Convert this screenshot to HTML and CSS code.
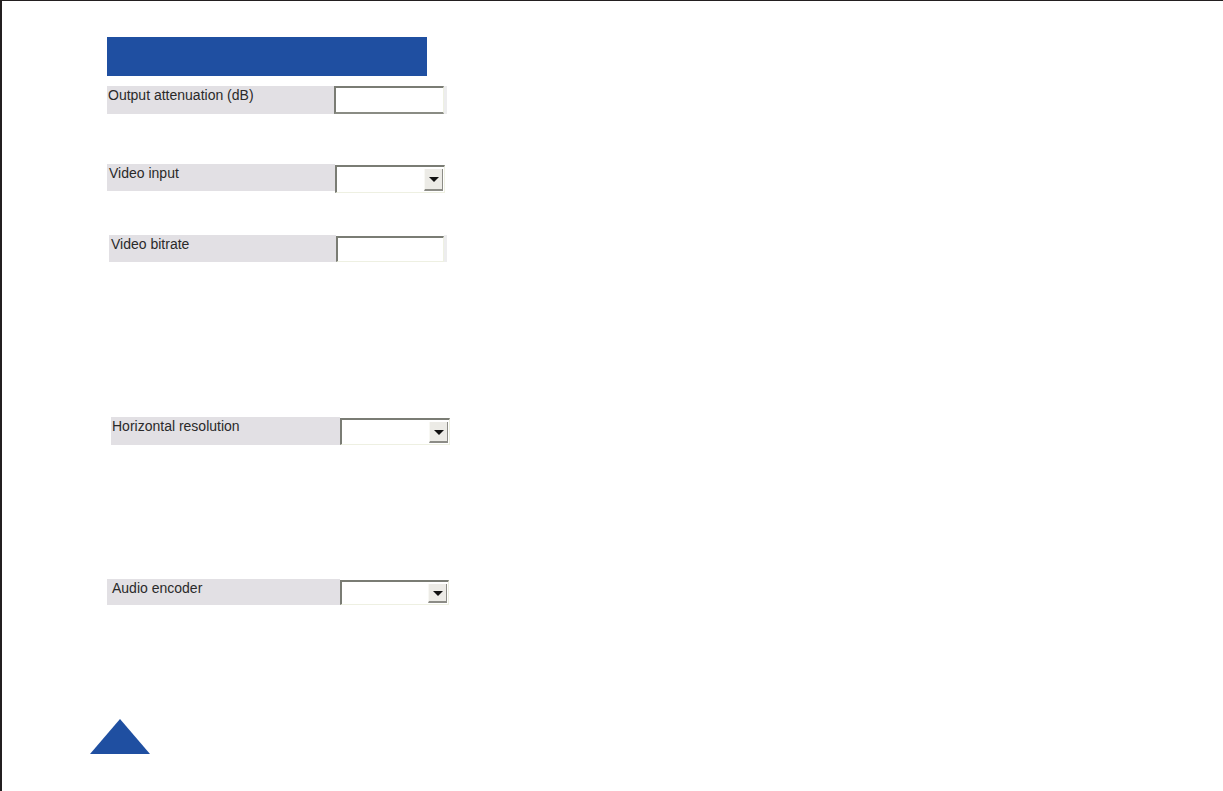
FILE: index.html
```html
<!DOCTYPE html>
<html lang="en">
<head>
    <meta charset="UTF-8">
    <title>Settings</title>
    <link rel="stylesheet" href="styles.css">
</head>
<body>
    <div class="page">
        <div class="header"></div>

        <div class="row row-attenuation">
            <div class="label">Output attenuation (dB)</div>
            <div class="field"></div>
            <div class="edge"></div>
        </div>

        <div class="row row-video-input">
            <div class="label">Video input</div>
            <div class="field combo"><span class="arrow"></span></div>
        </div>

        <div class="row row-bitrate">
            <div class="label">Video bitrate</div>
            <div class="field"></div>
            <div class="edge"></div>
        </div>

        <div class="row row-resolution">
            <div class="label">Horizontal resolution</div>
            <div class="field combo"><span class="arrow"></span></div>
        </div>

        <div class="row row-audio">
            <div class="label">Audio encoder</div>
            <div class="field combo"><span class="arrow"></span></div>
        </div>

        <div class="up-mark"></div>
    </div>
</body>
</html>
```

FILE: styles.css
```css
body {
    margin: 0;
    font-family: "Liberation Sans", Arial, sans-serif;
    background: #fff;
}
.page {
    box-sizing: border-box;
    width: 1223px;
    height: 791px;
    border-top: 1px solid #231f20;
    border-left: 2px solid #231f20;
    padding-left: 105px;
    overflow: hidden;
}
.header {
    margin-top: 36px;
    width: 320px;
    height: 39px;
    background-color: #1f4fa1;
}
.row {
    display: flex;
    align-items: flex-start;
}
.label {
    box-sizing: border-box;
    background-color: #e2e0e4;
    color: #2a2a2a;
    font-size: 14px;
    line-height: 17px;
    padding: 1px 0 0 1px;
    overflow: hidden;
    white-space: nowrap;
}
.field {
    box-sizing: border-box;
    position: relative;
    background: #fff;
    border-top: 2px solid #7a7c74;
    border-left: 2px solid #7a7c74;
    border-right: 1px solid #eef0e2;
    border-bottom: 1px solid #eef0e2;
}
.edge {
    width: 3px;
    background: #ededee;
    align-self: stretch;
}
.combo .arrow {
    position: absolute;
    right: 1px;
    top: 2px;
    bottom: 1px;
    width: 19px;
    background: #ecebe6;
    border-left: 1px solid #f8f8f4;
    border-bottom: 2px solid #8c8c86;
    border-right: 1px solid #8c8c86;
    box-sizing: border-box;
}
.combo .arrow::after {
    content: "";
    position: absolute;
    left: 4px;
    top: 50%;
    margin-top: -2px;
    border-left: 5px solid transparent;
    border-right: 5px solid transparent;
    border-top: 5px solid #111;
}

.row-attenuation {
    margin-top: 10px;
}
.row-attenuation .label {
    width: 227px;
    height: 28px;
}
.row-attenuation .field {
    width: 110px;
    height: 28px;
    border-bottom: 2px solid #8a8c84;
}

.row-video-input {
    margin-top: 50px;
}
.row-video-input .label {
    width: 228px;
    height: 27px;
    padding-left: 2px;
}
.row-video-input .field {
    width: 110px;
    height: 28px;
    margin-top: 1px;
}

.row-bitrate {
    margin-top: 42px;
    margin-left: 2px;
}
.row-bitrate .label {
    width: 227px;
    height: 27px;
    padding-left: 2px;
}
.row-bitrate .field {
    width: 108px;
    height: 26px;
    margin-top: 1px;
}

.row-resolution {
    margin-top: 155px;
    margin-left: 4px;
}
.row-resolution .label {
    width: 229px;
    height: 28px;
    padding-left: 1px;
}
.row-resolution .field {
    width: 110px;
    height: 27px;
    margin-top: 1px;
}

.row-audio {
    margin-top: 134px;
}
.row-audio .label {
    width: 233px;
    height: 26px;
    padding-left: 5px;
}
.row-audio .field {
    width: 109px;
    height: 25px;
    margin-top: 1px;
}

.up-mark {
    margin-top: 114px;
    margin-left: -17px;
    width: 0;
    height: 0;
    border-left: 30px solid transparent;
    border-right: 30px solid transparent;
    border-bottom: 35px solid #1f4fa1;
}
```
